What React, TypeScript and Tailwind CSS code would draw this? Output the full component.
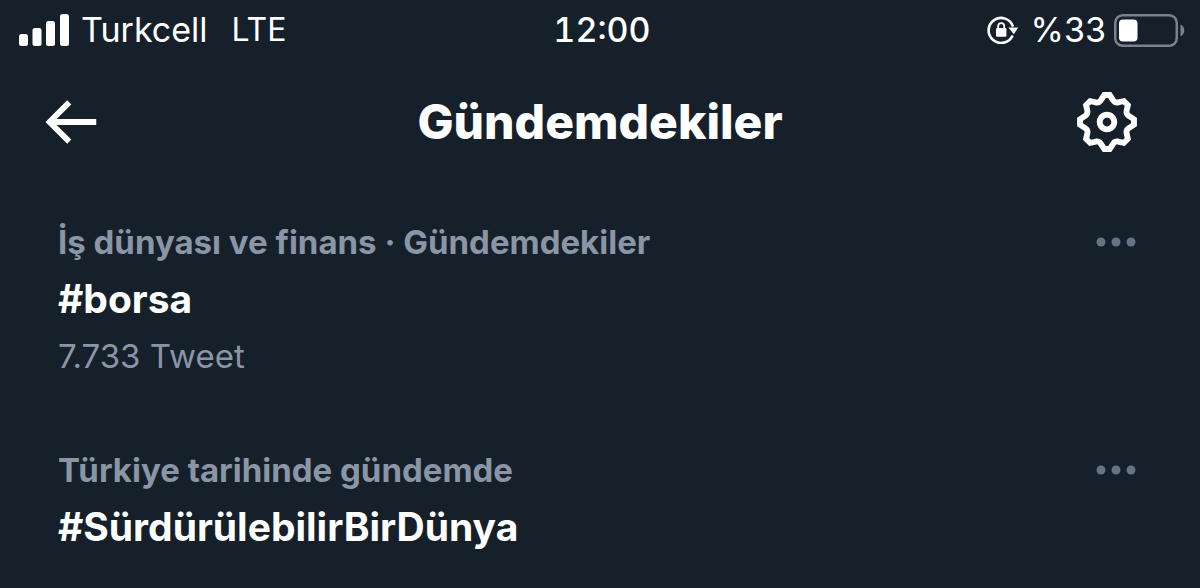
type Trend = { label: string; tag: string; count?: string };

const trends: Trend[] = [
  { label: 'İş dünyası ve finans · Gündemdekiler', tag: '#borsa', count: '7.733 Tweet' },
  { label: 'Türkiye tarihinde gündemde', tag: '#SürdürülebilirBirDünya' },
];

function SignalIcon() {
  return (
    <svg width="50" height="32" viewBox="0 0 50 32" fill="currentColor" aria-hidden="true">
      <rect x="0" y="20" width="9" height="12" rx="2.5" />
      <rect x="13.5" y="14" width="9" height="18" rx="2.5" />
      <rect x="27" y="7" width="9" height="25" rx="2.5" />
      <rect x="41" y="0" width="9" height="32" rx="2.5" />
    </svg>
  );
}

function RotationLockIcon() {
  return (
    <svg width="32" height="28" viewBox="0 0 32 28" fill="none" aria-hidden="true">
      <path d="M25.6 19.4A12.5 12.5 0 1 1 26 10.6" stroke="currentColor" strokeWidth="2.6" />
      <path d="M21.4 11.4h9.8l-4.4 6.8z" fill="currentColor" />
      <rect x="9" y="12" width="10.4" height="8.8" rx="1.2" fill="currentColor" />
      <path d="M11.2 12.5v-2.4a3 3 0 0 1 6 0v2.4" stroke="currentColor" strokeWidth="1.8" />
    </svg>
  );
}

function BatteryIcon() {
  return (
    <svg width="71" height="33" viewBox="0 0 71 33" fill="none" aria-hidden="true">
      <rect x="1.25" y="1.25" width="61.5" height="30.5" rx="7.5" stroke="#7b828b" strokeWidth="2.5" />
      <rect x="5" y="5.5" width="18.5" height="22" rx="4" fill="#fff" />
      <path d="M66.5 10.5c5 2 5 10 0 12z" fill="#7b828b" />
    </svg>
  );
}

function BackIcon() {
  return (
    <svg width="70" height="70" viewBox="0 0 24 24" fill="currentColor" aria-hidden="true">
      <path d="M7.414 13l5.043 5.04-1.414 1.42L3.586 12l7.457-7.46 1.414 1.42L7.414 11H21v2H7.414z" />
    </svg>
  );
}

function GearIcon() {
  return (
    <svg width="70" height="70" viewBox="0 0 24 24" fill="currentColor" aria-hidden="true">
      <path d="M10.54 1.75h2.92l1.57 2.36c.11.17.32.25.53.21l2.53-.59 2.17 2.17-.58 2.54c-.05.2.04.41.21.53l2.36 1.57v2.92l-2.36 1.57c-.17.12-.26.33-.21.53l.58 2.54-2.17 2.17-2.53-.59c-.21-.04-.42.04-.53.21l-1.57 2.36h-2.92l-1.58-2.36c-.11-.17-.32-.25-.52-.21l-2.54.59-2.17-2.17.58-2.54c.05-.2-.03-.41-.21-.53l-2.35-1.57v-2.92L4.1 8.97c.18-.12.26-.33.21-.53L3.73 5.9 5.9 3.73l2.54.59c.2.04.41-.04.52-.21l1.58-2.36zm1.07 2l-.98 1.47C10.05 6.08 9 6.5 7.99 6.27l-1.46-.34-.6.6.33 1.46c.24 1.01-.18 2.07-1.05 2.64l-1.46.98v.78l1.46.98c.87.57 1.29 1.63 1.05 2.64l-.33 1.46.6.6 1.46-.34c1.01-.23 2.06.19 2.64 1.05l.98 1.47h.78l.97-1.47c.58-.86 1.63-1.28 2.65-1.05l1.45.34.61-.6-.34-1.46c-.23-1.01.18-2.07 1.05-2.64l1.47-.98v-.78l-1.47-.98c-.87-.57-1.28-1.63-1.05-2.64l.34-1.46-.61-.6-1.45.34c-1.02.23-2.07-.19-2.65-1.05l-.97-1.47h-.78zM12 10.5c-.83 0-1.5.67-1.5 1.5s.67 1.5 1.5 1.5c.82 0 1.5-.67 1.5-1.5s-.68-1.5-1.5-1.5zM8.5 12c0-1.93 1.56-3.5 3.5-3.5 1.93 0 3.5 1.57 3.5 3.5s-1.57 3.5-3.5 3.5c-1.94 0-3.5-1.57-3.5-3.5z" />
    </svg>
  );
}

function MoreIcon() {
  return (
    <svg width="40" height="10" viewBox="0 0 40 10" fill="currentColor" aria-hidden="true">
      <circle cx="5" cy="5" r="4.5" />
      <circle cx="20" cy="5" r="4.5" />
      <circle cx="35" cy="5" r="4.5" />
    </svg>
  );
}

function TrendItem({ label, tag, count }: Trend) {
  return (
    <li className="flex items-start justify-between">
      <div>
        <p className="text-[33px] leading-[56px] font-bold text-[#8a95a5]">{label}</p>
        <h2 className="text-[39px] leading-[58px] font-bold">
          <a href="#trend">{tag}</a>
        </h2>
        {count && <p className="text-[33px] leading-[56px] text-[#8a95a5]">{count}</p>}
      </div>
      <button type="button" aria-label="Diğer" className="flex h-14 items-center text-[#657384]">
        <MoreIcon />
      </button>
    </li>
  );
}

export default function App() {
  return (
    <div className="min-h-screen bg-[#16202b] font-['Inter','Liberation_Sans',sans-serif] text-white">
      <div className="grid h-[60px] grid-cols-[1fr_auto_1fr] items-center pr-[15px] pl-[19px] text-[34px] leading-[60px]">
        <div className="flex items-center gap-3">
          <SignalIcon />
          <span>Turkcell</span>
          <span className="ml-3 text-[32px]">LTE</span>
        </div>
        <span className="font-medium tabular-nums">12:00</span>
        <div className="flex items-center justify-end gap-2">
          <RotationLockIcon />
          <span className="ml-1">%33</span>
          <BatteryIcon />
        </div>
      </div>

      <header className="grid h-[124px] grid-cols-[1fr_auto_1fr] items-center px-[35px]">
        <button type="button" aria-label="Geri" className="justify-self-start">
          <BackIcon />
        </button>
        <h1 className="text-[48px] leading-[60px] font-extrabold">Gündemdekiler</h1>
        <button type="button" aria-label="Ayarlar" className="mr-[23px] justify-self-end">
          <GearIcon />
        </button>
      </header>

      <main className="pt-[30px] pr-16 pl-[58px]">
        <ul className="flex flex-col gap-[58px]">
          {trends.map((trend) => (
            <TrendItem key={trend.tag} {...trend} />
          ))}
        </ul>
      </main>
    </div>
  );
}
